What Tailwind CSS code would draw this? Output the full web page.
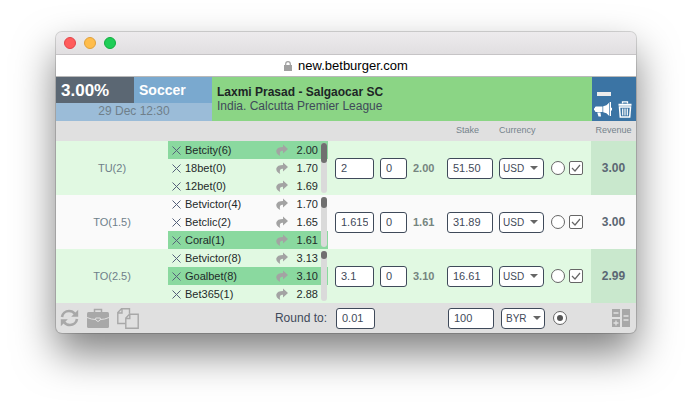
<!DOCTYPE html>
<html lang="en">
<head>
  <meta charset="utf-8">
  <meta name="viewport" content="width=device-width, initial-scale=1">
  <title>new.betburger.com</title>
  <script src="https://cdn.jsdelivr.net/npm/@tailwindcss/browser@4"></script>
</head>
<body class="min-h-screen bg-white px-14 py-8 font-['Liberation_Sans',Arial,sans-serif] text-[11px] text-[#3f4a5a]">

  <!-- Icon sprite -->
  <svg class="hidden" aria-hidden="true">
    <symbol id="cross" viewBox="0 0 9 9"><path d="M.5 .5l8 8M8.500 .5l-8 8" fill="none" stroke="#55607a" stroke-width="1"/></symbol>
    <symbol id="share" viewBox="0 0 12 12"><path d="M7 .5l5 4.500-5 4.500V6.800C4.500 6.800 3.200 8 4.200 12 1.200 10.500 0 8.500 .3 6.500 .8 4 3.500 3 7 3z" fill="#a3a3a3"/></symbol>
    <symbol id="caret" viewBox="0 0 8 4"><path d="M0 0h8L4 4z" fill="#666"/></symbol>
    <symbol id="tick" viewBox="0 0 14 14"><path d="M3 7l3 3 5-6" fill="none" stroke="#666" stroke-width="1.200"/></symbol>
  </svg>

  <div class="overflow-hidden rounded-md bg-[#e0e0e0] shadow-[0_0_0_1px_rgba(0,0,0,0.15),0_20px_40px_rgba(0,0,0,0.5)]">

    <!-- Title bar -->
    <div class="flex h-[23px] items-center gap-2 border-b border-[#c6c4c6] bg-linear-to-b from-[#edebed] to-[#e1dfe1] px-2">
      <button type="button" aria-label="Close" class="size-3 rounded-full border border-[#e2444a] bg-[#ff5c5c]"></button>
      <button type="button" aria-label="Minimize" class="size-3 rounded-full border border-[#dfa03c] bg-[#ffbd4c]"></button>
      <button type="button" aria-label="Zoom" class="size-3 rounded-full border border-[#12ad3f] bg-[#1fcd57]"></button>
    </div>

    <!-- Address -->
    <div class="flex h-[22px] items-center justify-center gap-1.5 border-b border-[#b9b9b9] bg-white text-[13px] leading-5 text-black">
      <svg class="h-2.5 w-2" viewBox="0 0 8 10"><path d="M0 4h8v6H0z" fill="#a0a0a0"/><path d="M1.700 4.500V3a2.300 2.300 0 014.600 0v1.500" fill="none" stroke="#a0a0a0" stroke-width="1.200"/></svg>
      <span>new.betburger.com</span>
    </div>

    <!-- Event header -->
    <header class="flex h-11">
      <div class="grid w-[156px] grid-cols-2 grid-rows-[26px_18px] font-bold text-white">
        <div class="bg-[#5b6773] pl-[5px] text-[17px] leading-[27px]">3.00%</div>
        <div class="bg-[#7aa9cf] pl-[5px] text-[14px] leading-[26px]">Soccer</div>
        <div class="col-span-2 bg-[#9bbcd8] text-center text-[12px] leading-4 font-normal text-[#6f7f8a]">29 Dec 12:30</div>
      </div>
      <div class="flex-1 bg-[#8bd585] pt-2 pl-[5px] text-[12px] leading-[14px]">
        <h1 class="font-bold text-[#1d2626]">Laxmi Prasad - Salgaocar SC</h1>
        <p>India. Calcutta Premier League</p>
      </div>
      <div class="flex w-11 flex-col justify-between bg-[#3b74a4] pt-[15px] pr-1 pb-[3px] pl-[2px]">
        <button type="button" aria-label="Collapse" class="ml-[3px] h-1 w-3.5 bg-[#ececec]"></button>
        <div class="flex items-center justify-between">
          <button type="button" aria-label="Notify">
            <svg class="block h-[15px] w-[18px]" viewBox="0 0 18 15" fill="#fff"><path d="M2 4.500h6.500v5.500H2C.8 9.500 .8 8.700 .8 8.200H0V6.300h.8c0-.8 .2-1.500 1.200-1.800zM9.200 4.300C11.500 4 13.500 2.800 15 .8v13c-1.500-2-3.500-3.200-5.800-3.500zM15.700 0H17v5.800h1v2.700h-1V14h-1.300zM3.200 10.500h3.300l.5 4H4.500z"/></svg>
          </button>
          <button type="button" aria-label="Delete">
            <svg class="block h-[17px] w-3.5" viewBox="0 0 14 17" fill="none" stroke="#fff"><path d="M4.500 2.500V.8h5v1.700" stroke-width="1.300"/><path d="M.5 3.700h13" stroke-width="2"/><path d="M1.500 6h11l-.8 10H2.300z" stroke-width="1.500"/><path d="M4.700 7.500v7M7 7.500v7M9.300 7.500v7" stroke-width="1.200"/></svg>
          </button>
        </div>
      </div>
    </header>

    <!-- Calculator -->
    <table class="w-full table-fixed border-collapse">
      <colgroup>
        <col>
        <col class="w-40">
        <col class="w-[113px]">
        <col class="w-[58px]">
        <col class="w-[52px]">
        <col class="w-10">
        <col class="w-[45px]">
      </colgroup>
      <thead>
        <tr class="h-5 text-left text-[9px] text-[#75838c]">
          <th colspan="3" class="p-0"></th>
          <th class="p-0 pl-[15px] font-normal">Stake</th>
          <th class="p-0 font-normal">Currency</th>
          <th class="p-0"></th>
          <th class="p-0 text-center font-normal">Revenue</th>
        </tr>
      </thead>
      <tbody>
        <tr class="h-[54px] bg-[#e1f9e2]">
          <td class="p-0 text-center text-[#6f7f8a]">TU(2)</td>
          <td class="p-0">
            <div class="relative">
              <ul class="leading-[18px] text-[#1f2a2a]">
                <li class="flex h-[18px] items-center bg-[#8ad99f] pr-2.5 pl-1"><button type="button" aria-label="Remove Betcity"><svg class="size-[9px]"><use href="#cross"/></svg></button><span class="flex-1 pl-1">Betcity(6)</span><a href="#" aria-label="Open Betcity"><svg class="size-3"><use href="#share"/></svg></a><span class="w-[30px] text-right">2.00</span></li>
                <li class="flex h-[18px] items-center pr-2.5 pl-1"><button type="button" aria-label="Remove 18bet"><svg class="size-[9px]"><use href="#cross"/></svg></button><span class="flex-1 pl-1">18bet(0)</span><a href="#" aria-label="Open 18bet"><svg class="size-3"><use href="#share"/></svg></a><span class="w-[30px] text-right">1.70</span></li>
                <li class="flex h-[18px] items-center pr-2.5 pl-1"><button type="button" aria-label="Remove 12bet"><svg class="size-[9px]"><use href="#cross"/></svg></button><span class="flex-1 pl-1">12bet(0)</span><a href="#" aria-label="Open 12bet"><svg class="size-3"><use href="#share"/></svg></a><span class="w-[30px] text-right">1.69</span></li>
              </ul>
              <div class="absolute inset-y-0.5 right-px w-1.5 rounded-full bg-[#dadada]"><div class="h-5 rounded-full bg-[#707070]"></div></div>
            </div>
          </td>
          <td class="p-0 pl-[7px]">
            <div class="flex items-center">
              <input type="text" value="2" aria-label="Odds" class="h-[21px] w-[39px] rounded-[3px] border border-[#3f4a5a] bg-white px-[5px]">
              <input type="text" value="0" aria-label="Commission" class="ml-1.5 h-[21px] w-[27px] rounded-[3px] border border-[#3f4a5a] bg-white px-[5px]">
              <span class="ml-1.5 font-bold text-[#75857f]">2.00</span>
            </div>
          </td>
          <td class="p-0 pl-1.5"><input type="text" value="51.50" aria-label="Stake" class="block h-[21px] w-[46px] rounded-[3px] border border-[#3f4a5a] bg-white px-[5px]"></td>
          <td class="p-0">
            <div class="grid w-[45px] items-center">
              <select aria-label="Currency" class="col-start-1 row-start-1 h-[21px] appearance-none rounded border border-[#3f4a5a] bg-white pl-[3px] text-[10px]"><option>USD</option></select>
              <svg class="pointer-events-none col-start-1 row-start-1 mr-1.5 h-1 w-2 justify-self-end"><use href="#caret"/></svg>
            </div>
          </td>
          <td class="p-0">
            <div class="flex gap-1">
              <input type="radio" name="fixed" aria-label="Fix stake" class="size-3.5 appearance-none rounded-full border border-[#666] bg-white">
              <span class="grid size-3.5">
                <input type="checkbox" checked aria-label="Use commission" class="col-start-1 row-start-1 size-3.5 appearance-none rounded-xs border border-[#666] bg-white">
                <svg class="pointer-events-none col-start-1 row-start-1 size-3.5"><use href="#tick"/></svg>
              </span>
            </div>
          </td>
          <td class="bg-[#c9e8cd] p-0 text-center text-[12px] font-bold text-[#5b6773]">3.00</td>
        </tr>

        <tr class="h-[54px] bg-[#fafafa]">
          <td class="p-0 text-center text-[#6f7f8a]">TO(1.5)</td>
          <td class="p-0">
            <div class="relative">
              <ul class="leading-[18px] text-[#1f2a2a]">
                <li class="flex h-[18px] items-center pr-2.5 pl-1"><button type="button" aria-label="Remove Betvictor"><svg class="size-[9px]"><use href="#cross"/></svg></button><span class="flex-1 pl-1">Betvictor(4)</span><a href="#" aria-label="Open Betvictor"><svg class="size-3"><use href="#share"/></svg></a><span class="w-[30px] text-right">1.70</span></li>
                <li class="flex h-[18px] items-center pr-2.5 pl-1"><button type="button" aria-label="Remove Betclic"><svg class="size-[9px]"><use href="#cross"/></svg></button><span class="flex-1 pl-1">Betclic(2)</span><a href="#" aria-label="Open Betclic"><svg class="size-3"><use href="#share"/></svg></a><span class="w-[30px] text-right">1.65</span></li>
                <li class="flex h-[18px] items-center bg-[#8ad99f] pr-2.5 pl-1"><button type="button" aria-label="Remove Coral"><svg class="size-[9px]"><use href="#cross"/></svg></button><span class="flex-1 pl-1">Coral(1)</span><a href="#" aria-label="Open Coral"><svg class="size-3"><use href="#share"/></svg></a><span class="w-[30px] text-right">1.61</span></li>
              </ul>
              <div class="absolute inset-y-0.5 right-px w-1.5 rounded-full bg-[#dadada]"><div class="h-[11px] rounded-full bg-[#707070]"></div></div>
            </div>
          </td>
          <td class="p-0 pl-[7px]">
            <div class="flex items-center">
              <input type="text" value="1.615" aria-label="Odds" class="h-[21px] w-[39px] rounded-[3px] border border-[#3f4a5a] bg-white px-[5px]">
              <input type="text" value="0" aria-label="Commission" class="ml-1.5 h-[21px] w-[27px] rounded-[3px] border border-[#3f4a5a] bg-white px-[5px]">
              <span class="ml-1.5 font-bold text-[#75857f]">1.61</span>
            </div>
          </td>
          <td class="p-0 pl-1.5"><input type="text" value="31.89" aria-label="Stake" class="block h-[21px] w-[46px] rounded-[3px] border border-[#3f4a5a] bg-white px-[5px]"></td>
          <td class="p-0">
            <div class="grid w-[45px] items-center">
              <select aria-label="Currency" class="col-start-1 row-start-1 h-[21px] appearance-none rounded border border-[#3f4a5a] bg-white pl-[3px] text-[10px]"><option>USD</option></select>
              <svg class="pointer-events-none col-start-1 row-start-1 mr-1.5 h-1 w-2 justify-self-end"><use href="#caret"/></svg>
            </div>
          </td>
          <td class="p-0">
            <div class="flex gap-1">
              <input type="radio" name="fixed" aria-label="Fix stake" class="size-3.5 appearance-none rounded-full border border-[#666] bg-white">
              <span class="grid size-3.5">
                <input type="checkbox" checked aria-label="Use commission" class="col-start-1 row-start-1 size-3.5 appearance-none rounded-xs border border-[#666] bg-white">
                <svg class="pointer-events-none col-start-1 row-start-1 size-3.5"><use href="#tick"/></svg>
              </span>
            </div>
          </td>
          <td class="p-0 text-center text-[12px] font-bold text-[#5b6773]">3.00</td>
        </tr>

        <tr class="h-[54px] bg-[#e1f9e2]">
          <td class="p-0 text-center text-[#6f7f8a]">TO(2.5)</td>
          <td class="p-0">
            <div class="relative">
              <ul class="leading-[18px] text-[#1f2a2a]">
                <li class="flex h-[18px] items-center pr-2.5 pl-1"><button type="button" aria-label="Remove Betvictor"><svg class="size-[9px]"><use href="#cross"/></svg></button><span class="flex-1 pl-1">Betvictor(8)</span><a href="#" aria-label="Open Betvictor"><svg class="size-3"><use href="#share"/></svg></a><span class="w-[30px] text-right">3.13</span></li>
                <li class="flex h-[18px] items-center bg-[#8ad99f] pr-2.5 pl-1"><button type="button" aria-label="Remove Goalbet"><svg class="size-[9px]"><use href="#cross"/></svg></button><span class="flex-1 pl-1">Goalbet(8)</span><a href="#" aria-label="Open Goalbet"><svg class="size-3"><use href="#share"/></svg></a><span class="w-[30px] text-right">3.10</span></li>
                <li class="flex h-[18px] items-center pr-2.5 pl-1"><button type="button" aria-label="Remove Bet365"><svg class="size-[9px]"><use href="#cross"/></svg></button><span class="flex-1 pl-1">Bet365(1)</span><a href="#" aria-label="Open Bet365"><svg class="size-3"><use href="#share"/></svg></a><span class="w-[30px] text-right">2.88</span></li>
              </ul>
              <div class="absolute inset-y-0.5 right-px w-1.5 rounded-full bg-[#dadada]"><div class="h-2 rounded-full bg-[#707070]"></div></div>
            </div>
          </td>
          <td class="p-0 pl-[7px]">
            <div class="flex items-center">
              <input type="text" value="3.1" aria-label="Odds" class="h-[21px] w-[39px] rounded-[3px] border border-[#3f4a5a] bg-white px-[5px]">
              <input type="text" value="0" aria-label="Commission" class="ml-1.5 h-[21px] w-[27px] rounded-[3px] border border-[#3f4a5a] bg-white px-[5px]">
              <span class="ml-1.5 font-bold text-[#75857f]">3.10</span>
            </div>
          </td>
          <td class="p-0 pl-1.5"><input type="text" value="16.61" aria-label="Stake" class="block h-[21px] w-[46px] rounded-[3px] border border-[#3f4a5a] bg-white px-[5px]"></td>
          <td class="p-0">
            <div class="grid w-[45px] items-center">
              <select aria-label="Currency" class="col-start-1 row-start-1 h-[21px] appearance-none rounded border border-[#3f4a5a] bg-white pl-[3px] text-[10px]"><option>USD</option></select>
              <svg class="pointer-events-none col-start-1 row-start-1 mr-1.5 h-1 w-2 justify-self-end"><use href="#caret"/></svg>
            </div>
          </td>
          <td class="p-0">
            <div class="flex gap-1">
              <input type="radio" name="fixed" aria-label="Fix stake" class="size-3.5 appearance-none rounded-full border border-[#666] bg-white">
              <span class="grid size-3.5">
                <input type="checkbox" checked aria-label="Use commission" class="col-start-1 row-start-1 size-3.5 appearance-none rounded-xs border border-[#666] bg-white">
                <svg class="pointer-events-none col-start-1 row-start-1 size-3.5"><use href="#tick"/></svg>
              </span>
            </div>
          </td>
          <td class="bg-[#c9e8cd] p-0 text-center text-[12px] font-bold text-[#5b6773]">2.99</td>
        </tr>
      </tbody>

      <!-- Totals and tools -->
      <tfoot>
        <tr class="h-[30px]">
          <td colspan="2" class="p-0 pl-1">
            <div class="flex items-center gap-2">
              <button type="button" aria-label="Refresh">
                <svg class="block h-[18px] w-[19px]" viewBox="0 0 19 18"><path d="M2 8c.5-3.500 3.500-6 7-6 2.400 0 4.500 1 5.800 2.800M17 10c-.5 3.500-3.500 6-7 6-2.400 0-4.500-1-5.800-2.800" fill="none" stroke="#a8a8a8" stroke-width="2.600"/><path d="M18.200 .8v7h-7zM.8 17.200v-7h7z" fill="#a8a8a8"/></svg>
              </button>
              <button type="button" aria-label="Portfolio">
                <svg class="block h-[20px] w-[22px]" viewBox="0 0 22 20"><path d="M7.500 4V1.500h7V4" fill="none" stroke="#a8a8a8" stroke-width="1.500"/><path d="M1.500 4h19Q22 4 22 5.500v13q0 1.500-1.500 1.500h-19Q0 20 0 18.500v-13Q0 4 1.500 4z" fill="#a8a8a8"/><path d="M0 9.500q4.500 2 8.500 2M22 9.500q-4.500 2-8.500 2M8.700 10h4.600v2L11 13.500 8.700 12z" fill="none" stroke="#e0e0e0" stroke-width="1"/></svg>
              </button>
              <button type="button" aria-label="Copy">
                <svg class="block h-[21px] w-[22px]" viewBox="0 0 22 21" fill="none" stroke="#a8a8a8" stroke-width="1.400"><path d="M8.500 15.500H.8V4.500L4.500 .8h8v5M.8 5h4.200V.8"/><path d="M12.500 6.200h8.700v14H8.800V10zM8.800 10.500h4V6.200"/></svg>
              </button>
              <label for="round" class="ml-auto pr-px text-[12px]">Round to:</label>
            </div>
          </td>
          <td class="p-0 pl-2"><input id="round" type="text" value="0.01" class="block h-[21px] w-[39px] rounded-[3px] border border-[#3f4a5a] bg-white px-[5px]"></td>
          <td class="p-0 pl-[7px]"><input type="text" value="100" aria-label="Total stake" class="block h-[21px] w-[46px] rounded-[3px] border border-[#3f4a5a] bg-white px-[5px]"></td>
          <td class="p-0 pl-0.5">
            <div class="grid w-11 items-center">
              <select aria-label="Total currency" class="col-start-1 row-start-1 h-[21px] appearance-none rounded border border-[#3f4a5a] bg-white pl-1 text-[10px]"><option>BYR</option></select>
              <svg class="pointer-events-none col-start-1 row-start-1 mr-1 h-1 w-2 justify-self-end"><use href="#caret"/></svg>
            </div>
          </td>
          <td class="p-0 pl-0.5">
            <span class="grid size-3.5 place-items-center">
              <input type="radio" name="fixed" checked aria-label="Fix total stake" class="col-start-1 row-start-1 size-3.5 appearance-none rounded-full border border-[#666] bg-white">
              <span class="pointer-events-none col-start-1 row-start-1 size-1.5 rounded-full bg-[#555]"></span>
            </span>
          </td>
          <td class="p-0 pr-1.5">
            <button type="button" aria-label="Calculator" class="ml-auto block">
              <svg class="block size-[18px]" viewBox="0 0 18 18"><path d="M0 0h8v8H0zM0 10h8v8H0zM10 0h8v18h-8z" fill="#a8a8a8"/><path d="M1.500 4h5M1.500 14h5M4 11.500v5M11.500 7h5M11.500 11h5" stroke="#e0e0e0" stroke-width="1.300"/></svg>
            </button>
          </td>
        </tr>
      </tfoot>
    </table>
  </div>

</body>
</html>
